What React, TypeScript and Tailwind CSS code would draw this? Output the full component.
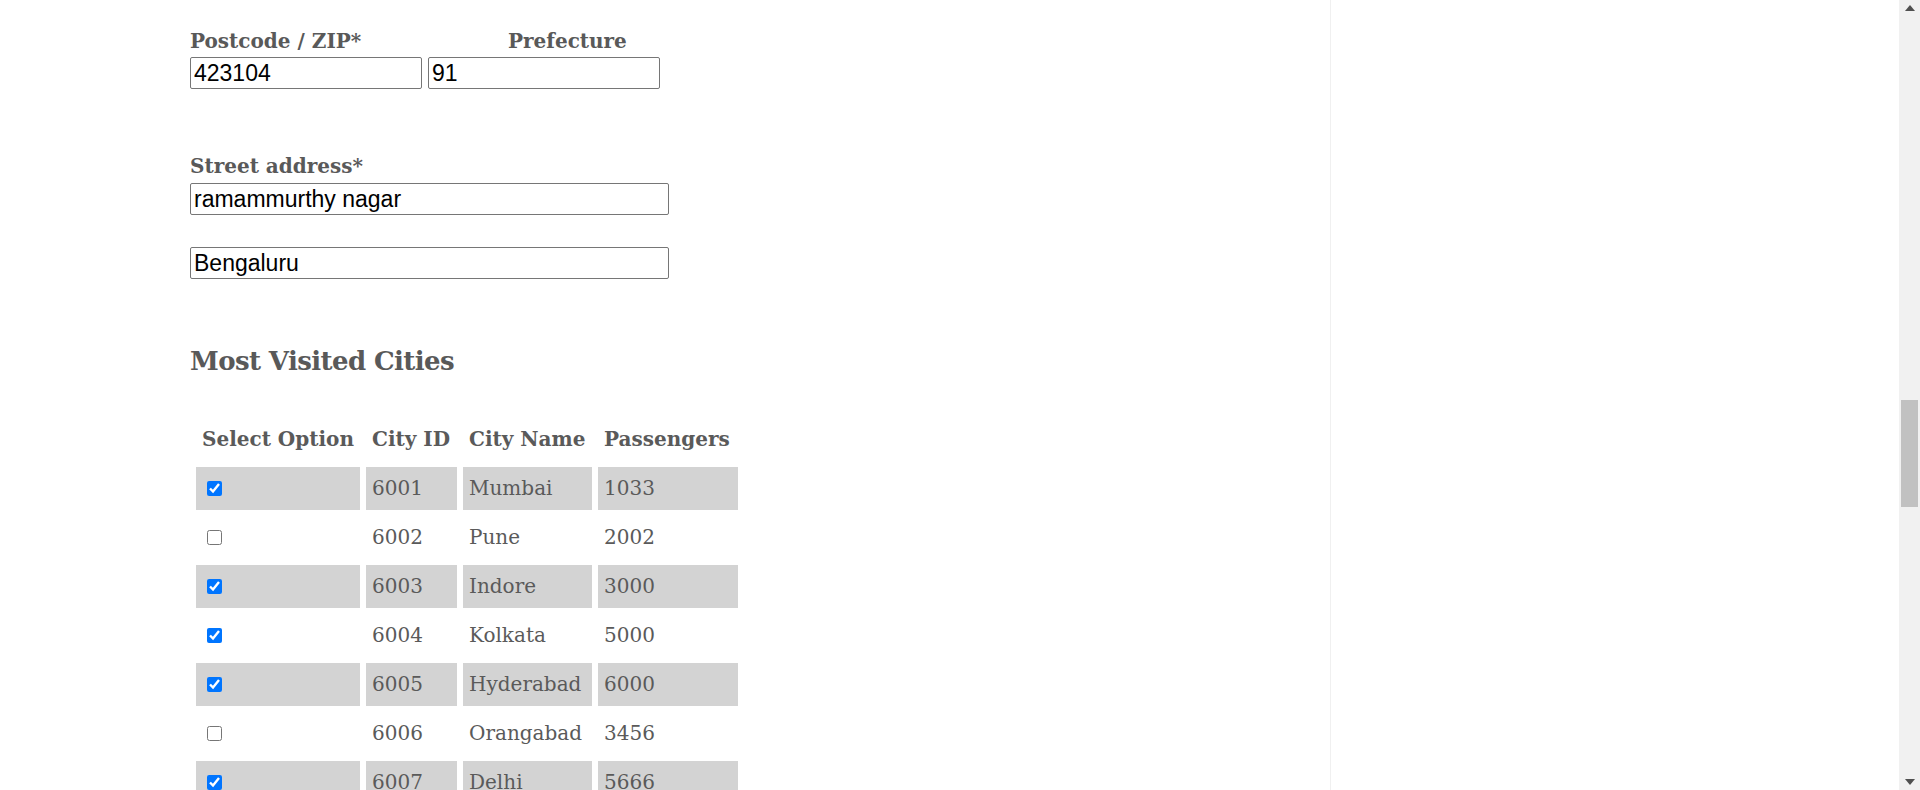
import React from "react";

const serif = "font-['DejaVu_Serif',serif]";

const cities = [
  { id: 6001, name: "Mumbai", passengers: 1033, checked: true },
  { id: 6002, name: "Pune", passengers: 2002, checked: false },
  { id: 6003, name: "Indore", passengers: 3000, checked: true },
  { id: 6004, name: "Kolkata", passengers: 5000, checked: true },
  { id: 6005, name: "Hyderabad", passengers: 6000, checked: true },
  { id: 6006, name: "Orangabad", passengers: 3456, checked: false },
  { id: 6007, name: "Delhi", passengers: 5666, checked: true },
];

const inputCls =
  "block h-[32px] border border-[#767676] rounded-[2px] bg-white px-[3px] text-[23px] leading-[28px] text-black font-['Liberation_Sans',Arial,sans-serif] outline-none";

const labelCls = `${serif} text-[20px] leading-[26px] font-bold text-[#595959]`;

const Scrollbar = () => (
  <div className="w-[21px] h-full bg-[#f1f1f1] flex flex-col items-center shrink-0">
    <div className="h-[21px] w-full flex items-center justify-center">
      <svg width="10" height="6" viewBox="0 0 10 6" className="-mt-[6px]">
        <polygon points="0,6 5,0 10,6" fill="#505050" />
      </svg>
    </div>
    <div className="mt-[379px] w-[17px] h-[107px] bg-[#c1c1c1]" />
    <div className="flex-1" />
    <div className="h-[21px] w-full flex items-center justify-center">
      <svg width="10" height="6" viewBox="0 0 10 6" className="mt-[4px]">
        <polygon points="0,0 10,0 5,6" fill="#505050" />
      </svg>
    </div>
  </div>
);

export default function App() {
  return (
    <div className="w-[1920px] h-[790px] overflow-hidden bg-white flex">
      <div className="w-[1331px] h-full border-r border-[#f0f0f0] shrink-0 pl-[190px] pt-[28px]">
        {/* postcode / prefecture */}
        <div className="flex">
          <span className={`${labelCls} w-[318px]`}>Postcode / ZIP*</span>
          <span className={labelCls}>Prefecture</span>
        </div>
        <div className="flex gap-[6px] mt-[3px]">
          <input className={`${inputCls} w-[232px]`} defaultValue="423104" />
          <input className={`${inputCls} w-[232px]`} defaultValue="91" />
        </div>

        {/* street */}
        <div className={`${labelCls} mt-[64px]`}>Street address*</div>
        <input className={`${inputCls} w-[479px] mt-[4px]`} defaultValue="ramammurthy nagar" />
        <input className={`${inputCls} w-[479px] mt-[32px]`} defaultValue="Bengaluru" />

        <h2 className={`${serif} text-[26px] leading-[36px] tracking-[-0.6px] font-bold text-[#595959] mt-[64px]`}>
          Most Visited Cities
        </h2>

        <table
          className={`${serif} mt-[33px] border-separate border-spacing-x-[6px] border-spacing-y-[6px] text-[20px] leading-[31px] text-[#5a5a5a]`}
        >
          <thead>
            <tr>
              <th className="w-[163px] px-[6px] py-[6px] text-left font-bold whitespace-nowrap">Select Option</th>
              <th className="w-[91px] px-[6px] py-[6px] text-left font-bold whitespace-nowrap">City ID</th>
              <th className="w-[129px] px-[6px] py-[6px] text-left font-bold whitespace-nowrap">City Name</th>
              <th className="w-[140px] px-[6px] py-[6px] text-left font-bold whitespace-nowrap">Passengers</th>
            </tr>
          </thead>
          <tbody>
            {cities.map((c, i) => {
              const bg = i % 2 === 0 ? "bg-[#d3d3d3]" : "bg-white";
              return (
                <tr key={c.id}>
                  <td className={`${bg} px-[6px] py-[6px] align-middle`}>
                    <input
                      type="checkbox"
                      defaultChecked={c.checked}
                      className="block w-[15px] h-[15px] m-0 ml-[5px] accent-[#0075ff]"
                    />
                  </td>
                  <td className={`${bg} px-[6px] py-[6px] whitespace-nowrap`}>{c.id}</td>
                  <td className={`${bg} px-[6px] py-[6px] whitespace-nowrap`}>{c.name}</td>
                  <td className={`${bg} px-[6px] py-[6px] whitespace-nowrap`}>{c.passengers}</td>
                </tr>
              );
            })}
          </tbody>
        </table>
      </div>
      <div className="flex-1" />
      <Scrollbar />
    </div>
  );
}
